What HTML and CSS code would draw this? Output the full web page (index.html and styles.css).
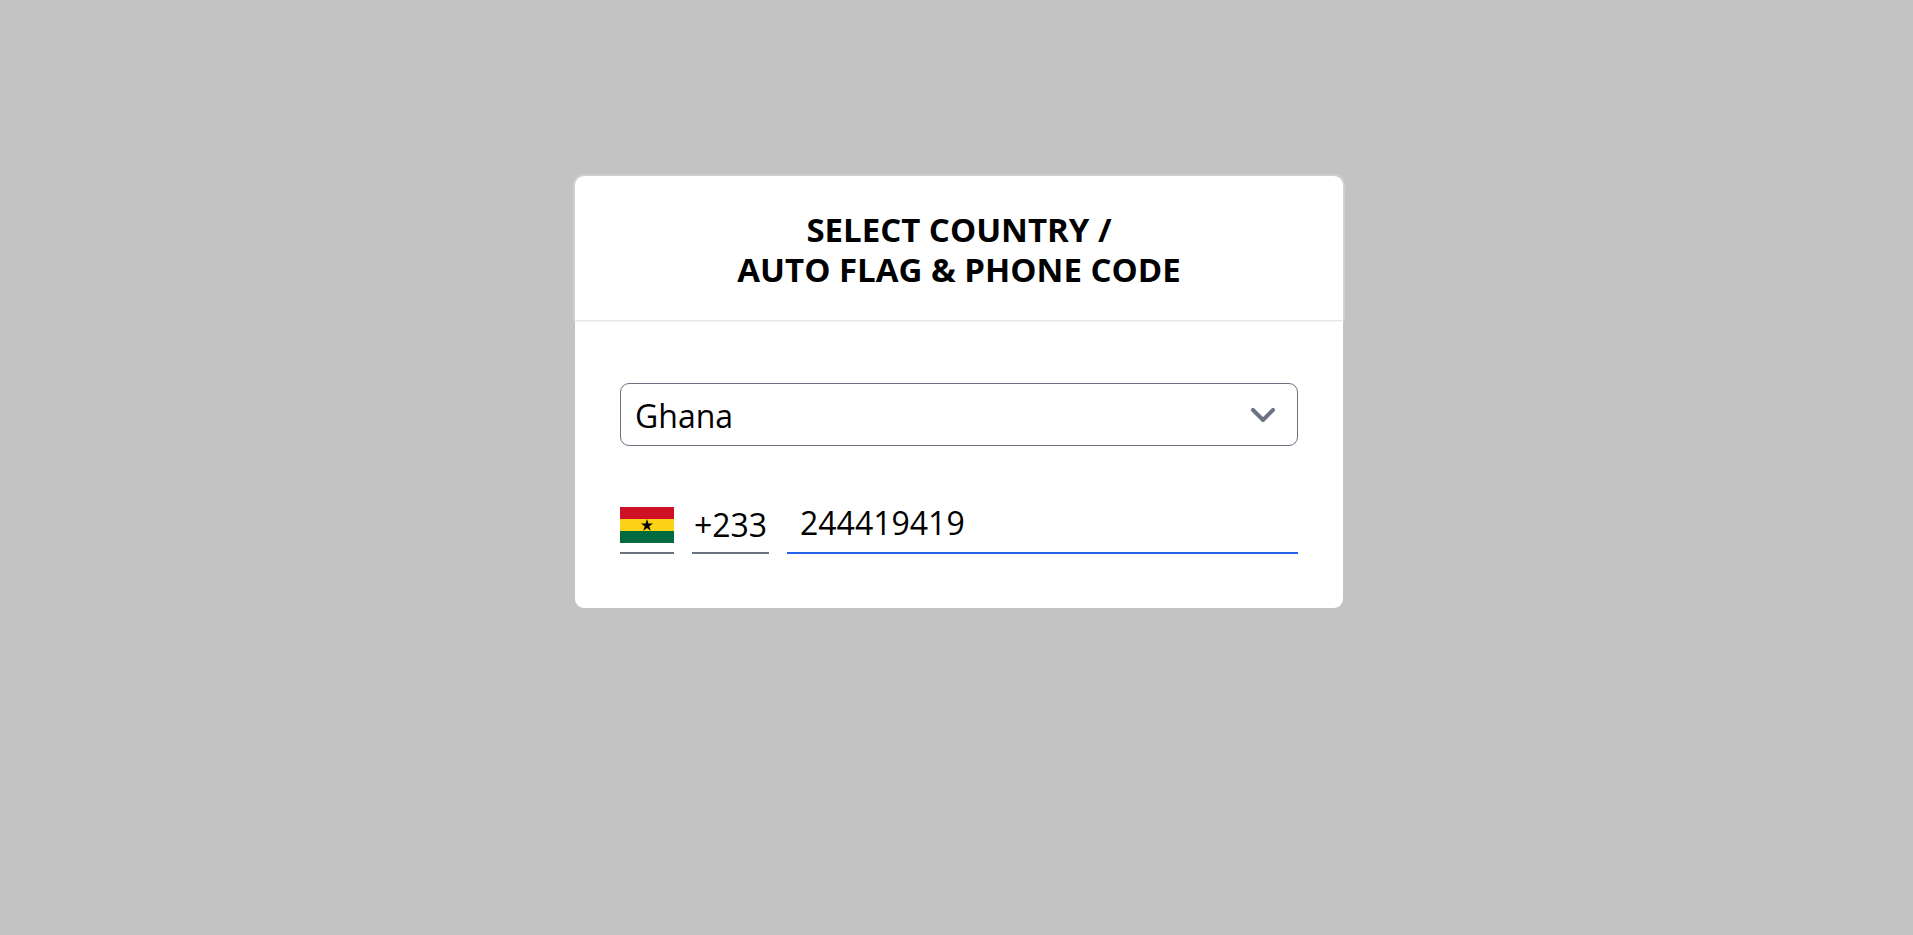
FILE: index.html
```html
<!DOCTYPE html>
<html lang="en">
<head>
  <meta charset="utf-8">
  <meta name="viewport" content="width=device-width, initial-scale=1">
  <title>Select Country</title>
  <link rel="stylesheet" href="styles.css">
</head>
<body>
  <main class="card">
    <header class="card-header">
      <h1 class="title">SELECT COUNTRY /<br>AUTO FLAG &amp; PHONE CODE</h1>
    </header>
    <form class="card-body">
      <div class="select-wrap">
        <select class="country" aria-label="Country">
          <option selected>Ghana</option>
        </select>
        <svg class="chevron" viewBox="0 0 24 14" aria-hidden="true">
          <path d="M2 2 L12 12 L22 2"/>
        </svg>
      </div>
      <div class="phone">
        <div class="flag-box">
          <svg class="flag" viewBox="0 0 54 36" role="img" aria-label="Flag of Ghana">
            <rect width="54" height="12" fill="#ce1126"/>
            <rect y="12" width="54" height="12" fill="#fcd116"/>
            <rect y="24" width="54" height="12" fill="#006b3f"/>
            <path d="M27 12 L30.7 23.8 L21 16.6 H33 L23.3 23.8 Z" fill="#000"/>
          </svg>
        </div>
        <label class="code" for="number">+233</label>
        <input class="number" id="number" type="tel" value="244419419">
      </div>
    </form>
  </main>
</body>
</html>
```
FILE: styles.css
```css
* {
  box-sizing: border-box;
}

body {
  margin: 0;
  min-height: 100vh;
  padding: 176px 20px 0 25px;
  background: #c3c3c3;
  color: #000;
  font-family: "Segoe UI", "Open Sans", "Noto Sans", sans-serif;
}

.card {
  max-width: 768px;
  margin: 0 auto;
  background: #fff;
  border-radius: 9px;
}

.card-header {
  padding: 34px 24px 30px;
  border-radius: 9px 9px 0 0;
  box-shadow: 0 1px 2px #dedede, 0 0 1px 2px rgba(255, 255, 255, 0.2);
}

.title {
  margin: 0;
  font-size: 33px;
  line-height: 40px;
  font-weight: 700;
  text-align: center;
}

.card-body {
  padding: 63px 45px 54px;
}

.select-wrap {
  display: grid;
  align-items: center;
}

.country,
.chevron {
  grid-area: 1 / 1;
}

.country {
  width: 100%;
  height: 63px;
  padding: 2px 64px 0 14px;
  appearance: none;
  border: 1px solid #6b7280;
  border-radius: 9px;
  background: #fff;
  color: inherit;
  font: inherit;
  font-size: 32px;
}

.chevron {
  justify-self: end;
  width: 24px;
  height: 14px;
  margin-right: 23px;
  pointer-events: none;
  fill: none;
  stroke: #6b7280;
  stroke-width: 4;
  stroke-linecap: round;
  stroke-linejoin: round;
}

.phone {
  display: flex;
  align-items: stretch;
  gap: 18px;
  height: 63px;
  margin-top: 45px;
}

.flag-box,
.code,
.number {
  border-bottom: 2px solid #6b7280;
}

.flag-box {
  display: flex;
  align-items: flex-end;
  padding-bottom: 9px;
}

.flag {
  width: 54px;
  height: 36px;
}

.code {
  min-width: 77px;
  padding-top: 12px;
  font-size: 32px;
  line-height: 44px;
  text-align: center;
}

.number {
  flex: 1;
  min-width: 0;
  padding: 2px 13px 0;
  border-width: 0 0 2px;
  border-color: #2563eb;
  outline: none;
  background: none;
  color: inherit;
  font: inherit;
  font-size: 32px;
}
```
